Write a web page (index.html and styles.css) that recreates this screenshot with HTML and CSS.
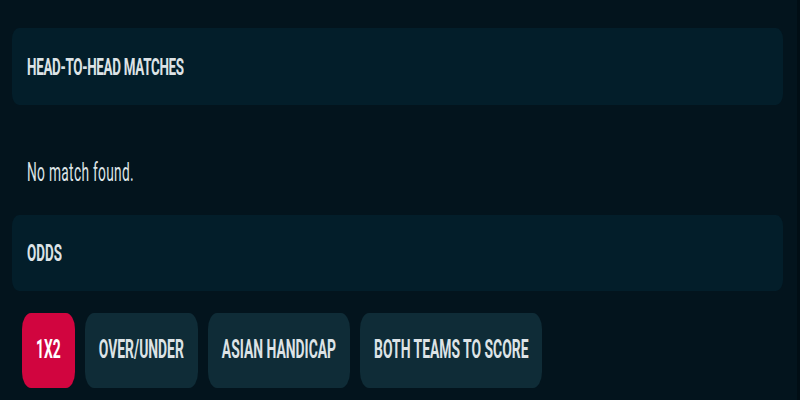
FILE: index.html
```html
<!DOCTYPE html>
<html lang="en">
<head>
    <meta charset="UTF-8">
    <meta name="viewport" content="width=device-width, initial-scale=1.0">
    <title>Match Centre</title>
    <link rel="stylesheet" href="styles.css">
</head>
<body>
    <div class="page">
        <div class="panel">
            <h2 class="panel-title"><span class="tall tight">HEAD-TO-HEAD MATCHES</span></h2>
        </div>
        <p class="empty"><span class="tall">No match found.</span></p>
        <div class="panel odds">
            <h2 class="panel-title"><span class="tall">ODDS</span></h2>
        </div>
        <div class="tabs">
            <button class="tab active"><span class="tall">1X2</span></button>
            <button class="tab"><span class="tall">OVER/UNDER</span></button>
            <button class="tab"><span class="tall">ASIAN HANDICAP</span></button>
            <button class="tab"><span class="tall">BOTH TEAMS TO SCORE</span></button>
        </div>
    </div>
</body>
</html>
```

FILE: styles.css
```css
html, body {
    margin: 0;
    height: 100%;
}
body {
    background: #03141d;
    border-right: 3px solid #010e15;
    box-sizing: border-box;
    font-family: "Roboto", "Liberation Sans", sans-serif;
    color: #dde3e6;
    -webkit-font-smoothing: antialiased;
}
.page {
    padding: 28px 14px 0 12px;
}
/* the capture is squeezed sideways, so the letters are drawn tall */
.tall {
    display: inline-block;
    line-height: 1;
    transform: scaleY(1.82);
}
.tight {
    letter-spacing: -0.3px;
}
.panel {
    background: #031e2a;
    border-radius: 7px / 11px;
    height: 77px;
    display: flex;
    align-items: center;
    padding: 0 15px;
}
.panel.odds {
    height: 76px;
}
.panel-title {
    margin: 0;
    font-size: 13.4px;
    font-weight: 700;
    line-height: 1;
}
.empty {
    display: flex;
    align-items: center;
    height: 30px;
    margin: 54px 0 26px 15px;
    font-size: 13.75px;
    letter-spacing: 0.3px;
}
.tabs {
    display: flex;
    gap: 10px;
    margin: 22px 0 0 10px;
}
.tab {
    display: flex;
    align-items: center;
    height: 75px;
    padding: 0 14px;
    border: none;
    border-radius: 9px / 16px;
    background: #0f2c37;
    color: #dde3e6;
    font-family: inherit;
    font-size: 13.9px;
    font-weight: 700;
}
.tab.active {
    background: #d1053f;
    color: #ffffff;
}
```
